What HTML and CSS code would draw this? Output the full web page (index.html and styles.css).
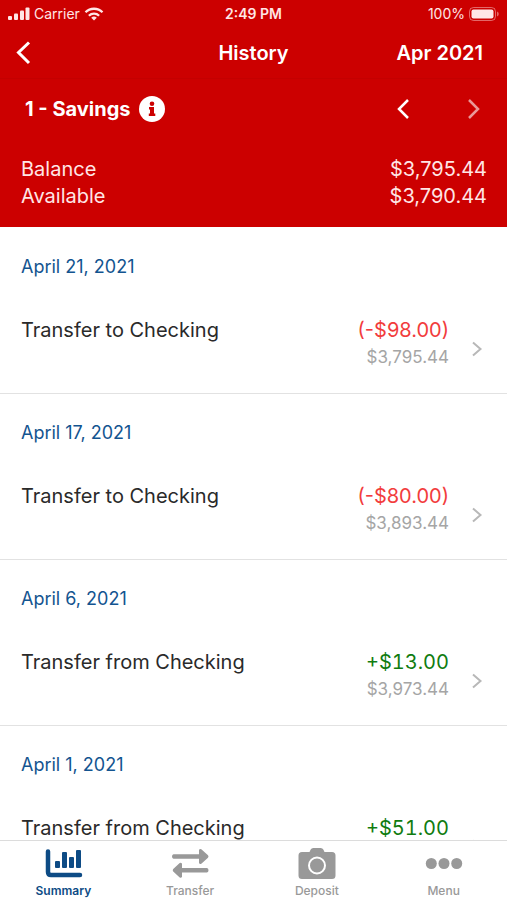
FILE: index.html
```html
<!DOCTYPE html>
<html lang="en">
<head>
<meta charset="utf-8">
<meta name="viewport" content="width=device-width, initial-scale=1">
<title>History</title>
<link rel="stylesheet" href="styles.css">
</head>
<body>
<div class="app">
  <header class="header">
    <div class="status">
      <div class="status-left">
        <svg width="22" height="14" viewBox="0 0 22 14" fill="currentColor" aria-hidden="true"><rect x="0" y="9" width="4" height="4" rx="1"/><rect x="6" y="6.500" width="4" height="6.500" rx="1"/><rect x="12" y="3.500" width="4" height="9.500" rx="1"/><rect x="17.500" y="0.500" width="4" height="12.500" rx="1"/></svg>
        <span>Carrier</span>
        <svg width="20" height="14" viewBox="0 0 20 14" aria-hidden="true"><g fill="none" stroke="currentColor" stroke-width="2.300"><path d="M1.500 5.300a12 12 0 0 1 17 0"/><path d="M4.900 8.700a7.200 7.200 0 0 1 10.200 0"/></g><path d="M10 13.600 7.200 10.800a4 4 0 0 1 5.600 0z" fill="currentColor"/></svg>
      </div>
      <span class="status-time">2:49 PM</span>
      <div class="status-right">
        <span>100%</span>
        <svg width="30" height="14" viewBox="0 0 30 14" aria-hidden="true"><rect x="0.500" y="0.500" width="26" height="13" rx="4" fill="none" stroke="currentColor" opacity="0.450"/><rect x="2.500" y="2.500" width="22" height="9" rx="2" fill="currentColor"/><path d="M28 4.500v5q1.800-.8 1.800-2.500t-1.800-2.500z" fill="currentColor" opacity="0.450"/></svg>
      </div>
    </div>
    <nav class="nav">
      <button class="icon-button nav-back" aria-label="Back"><svg width="16" height="24" viewBox="0 0 16 24"><path d="M14 1.500 3.500 11.500 14 22" fill="none" stroke="currentColor" stroke-width="3"/></svg></button>
      <h1 class="nav-title">History</h1>
      <button class="icon-button nav-month">Apr 2021</button>
    </nav>
    <div class="account">
      <h2 class="account-name">1 - Savings</h2>
      <button class="icon-button info" aria-label="Account information"><svg width="26" height="26" viewBox="0 0 26 26"><circle cx="13" cy="13" r="13" fill="currentColor"/><g fill="#c00"><circle cx="13" cy="7.700" r="2.300"/><path d="M10 11h5v6.500h1.300V20H9.800v-2.500H11v-4h-1z"/></g></svg></button>
      <div class="pager">
        <button class="icon-button" aria-label="Previous account"><svg width="14" height="22" viewBox="0 0 14 22"><path d="M12 2 3 11l9 9" fill="none" stroke="currentColor" stroke-width="2.500"/></svg></button>
        <button class="icon-button pager-next" aria-label="Next account" disabled><svg width="14" height="22" viewBox="0 0 14 22"><path d="m2 2 9 9-9 9" fill="none" stroke="currentColor" stroke-width="2.500"/></svg></button>
      </div>
    </div>
    <dl class="totals">
      <div class="total"><dt>Balance</dt><dd>$3,795.44</dd></div>
      <div class="total"><dt>Available</dt><dd>$3,790.44</dd></div>
    </dl>
  </header>
  <main class="list">
    <section class="entry">
      <h3 class="date">April 21, 2021</h3>
      <a class="row" href="#"><span class="name">Transfer to Checking</span><span class="figures"><span class="amount debit">(-$98.00)</span><span class="running">$3,795.44</span></span><svg class="chevron" width="12" height="16" viewBox="0 0 12 16"><path d="m2 1.500 7.500 6.500L2 14.500" fill="none" stroke="currentColor" stroke-width="2"/></svg></a>
    </section>
    <section class="entry">
      <h3 class="date">April 17, 2021</h3>
      <a class="row" href="#"><span class="name">Transfer to Checking</span><span class="figures"><span class="amount debit">(-$80.00)</span><span class="running">$3,893.44</span></span><svg class="chevron" width="12" height="16" viewBox="0 0 12 16"><path d="m2 1.500 7.500 6.500L2 14.500" fill="none" stroke="currentColor" stroke-width="2"/></svg></a>
    </section>
    <section class="entry">
      <h3 class="date">April 6, 2021</h3>
      <a class="row" href="#"><span class="name">Transfer from Checking</span><span class="figures"><span class="amount credit">+$13.00</span><span class="running">$3,973.44</span></span><svg class="chevron" width="12" height="16" viewBox="0 0 12 16"><path d="m2 1.500 7.500 6.500L2 14.500" fill="none" stroke="currentColor" stroke-width="2"/></svg></a>
    </section>
    <section class="entry">
      <h3 class="date">April 1, 2021</h3>
      <a class="row" href="#"><span class="name">Transfer from Checking</span><span class="figures"><span class="amount credit">+$51.00</span></span><svg class="chevron" width="12" height="16" viewBox="0 0 12 16"><path d="m2 1.500 7.500 6.500L2 14.500" fill="none" stroke="currentColor" stroke-width="2"/></svg></a>
    </section>
  </main>
  <nav class="tabs">
    <a class="tab tab-active" href="#"><svg width="38" height="32" viewBox="0 0 38 32"><path d="M4 2.500V23q0 3 3 3h29" fill="none" stroke="currentColor" stroke-width="4.500" stroke-linecap="round"/><g fill="currentColor"><rect x="11" y="12" width="5" height="7" rx="1"/><rect x="18" y="3" width="5" height="16" rx="1"/><rect x="25" y="8" width="5" height="11" rx="1"/><rect x="32" y="1" width="5" height="18" rx="1"/></g></svg><span>Summary</span></a>
    <a class="tab" href="#"><svg width="38" height="32" viewBox="0 0 38 32"><g fill="currentColor"><path d="M2.500 5.300H28V1q.7-1.500 2.300-.7l6.700 6q1 1.200 0 2.400l-6.700 6q-1.600.8-2.300-.7V9.800H2.500Q1 9.300 1 7.500t1.500-2.200z"/><path d="M36 19H11v-4.300q-.7-1.500-2.300-.7l-6.500 6q-1 1.200 0 2.400l6.500 6q1.600.8 2.300-.7v-4.200h25q1.500-.5 1.500-2.300T36 19z"/></g></svg><span>Transfer</span></a>
    <a class="tab" href="#"><svg width="38" height="32" viewBox="0 0 38 32"><path d="M4 3h7.500l1.200-2.500Q13.400-1 15.300-1h7.400q1.900 0 2.600 1.500L26.500 3H34q3.500 0 3.500 3.500v20q0 3.500-3.500 3.500H4Q.5 30 .5 26.500v-20Q.5 3 4 3z" fill="currentColor"/><circle cx="19" cy="16.500" r="8" fill="none" stroke="#fff" stroke-width="2"/></svg><span>Deposit</span></a>
    <a class="tab" href="#"><svg width="38" height="32" viewBox="0 0 38 32"><g fill="currentColor"><circle cx="6.300" cy="14.500" r="5.500"/><circle cx="19" cy="14.500" r="5.500"/><circle cx="31.700" cy="14.500" r="5.500"/></g></svg><span>Menu</span></a>
  </nav>
</div>
</body>
</html>
```
FILE: styles.css
```css
* { box-sizing: border-box; }

body {
  margin: 0;
  font-family: Inter, "Liberation Sans", sans-serif;
  color: #2a2a2a;
  background: #fff;
}

h1, h2, h3, dl, dd { margin: 0; }

a { color: inherit; text-decoration: none; }

svg { display: block; flex: none; overflow: visible; }

.app {
  display: flex;
  flex-direction: column;
  height: 100vh;
}

.header {
  flex: none;
  padding-bottom: 17px;
  background: #c00;
  color: #fff;
}

.status {
  display: grid;
  grid-template-columns: 1fr auto 1fr;
  align-items: center;
  height: 27px;
  padding: 0 8px;
  font-size: 14px;
  color: #ffe6e6;
}

.status-left, .status-right {
  display: flex;
  align-items: center;
  gap: 4px;
}

.status-right { justify-content: flex-end; }

.status-time { font-weight: 600; }

.nav {
  display: grid;
  grid-template-columns: 1fr auto 1fr;
  align-items: center;
  height: 52px;
  padding: 0 24px;
  border-bottom: 1px solid #c40000;
}

.icon-button {
  padding: 0;
  border: 0;
  background: none;
  color: inherit;
  font: inherit;
}

.nav-back {
  justify-self: start;
  margin-left: -9px;
}

.icon-button.nav-month, .nav-title {
  font-size: 20px;
  font-weight: 600;
}

.nav-month { justify-self: end; }

.account {
  display: flex;
  align-items: center;
  gap: 8px;
  height: 59px;
  padding: 0 26px 0 25px;
}

.account-name {
  font-size: 20px;
  font-weight: 700;
}

.pager {
  display: flex;
  gap: 57px;
  margin-left: auto;
}

.pager-next { opacity: 0.6; }

.totals {
  padding: 18px 20px 0 21px;
  font-size: 20px;
  line-height: 27px;
  color: #ffe6e6;
}

.total {
  display: flex;
  justify-content: space-between;
}

.list {
  flex: 1;
  min-height: 0;
  overflow: hidden;
}

.entry {
  height: 166px;
  padding: 27px 24px 0 21px;
  border-top: 1px solid #e2e2e2;
}

.entry:first-child { border-top-color: #fff; }

.date {
  margin-bottom: 37px;
  font-size: 18px;
  font-weight: 400;
  line-height: 24px;
  color: #135490;
}

.row {
  display: grid;
  grid-template-columns: 1fr auto auto;
  line-height: 28px;
  font-size: 20px;
}

.figures {
  display: grid;
  text-align: right;
}

.debit { color: #f23c3c; }

.credit {
  font-variant-numeric: tabular-nums;
  color: #107c10;
}

.running {
  font-size: 17px;
  line-height: 26px;
  color: #a5a5a5;
}

.chevron {
  margin: 25px 0 0 22px;
  color: #b8b8b8;
}

.tabs {
  display: grid;
  grid-template-columns: repeat(4, 1fr);
  flex: none;
  height: 60px;
  border-top: 1px solid #dcdcdc;
  background: #fff;
}

.tab {
  display: flex;
  flex-direction: column;
  align-items: center;
  padding-top: 8px;
  font-size: 12px;
  font-weight: 500;
  line-height: 20px;
  color: #999;
}

.tab-active {
  font-weight: 600;
  color: #0d4b85;
}
```
